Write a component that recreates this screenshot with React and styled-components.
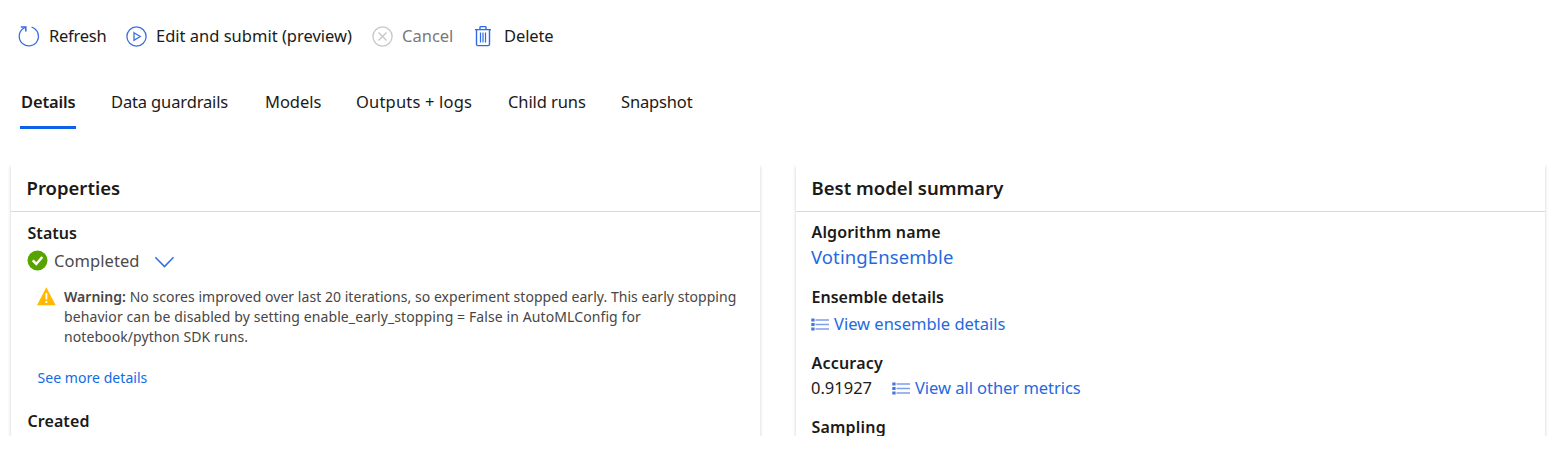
import React from 'react';
import styled, { createGlobalStyle } from 'styled-components';

const Global = createGlobalStyle`
  * { box-sizing: border-box; }
  body {
    margin: 0;
    background: #fff;
    color: #1b1a19;
    font-family: "Segoe UI", "Noto Sans", "Open Sans", sans-serif;
    overflow: hidden;
  }
`;

const Page = styled.div`
  width: 1549px;
  height: 436px;
  overflow: hidden;
`;

const Toolbar = styled.div`
  display: flex;
  align-items: center;
  height: 72px;
  padding-left: 18px;
`;

const Command = styled.button`
  display: flex;
  align-items: center;
  gap: ${(p) => p.$gap}px;
  width: ${(p) => p.$width}px;
  height: 28px;
  padding: 0;
  border: 0;
  background: none;
  font: inherit;
  font-size: 16.5px;
  letter-spacing: ${(p) => p.$track || 0}px;
  white-space: nowrap;
  color: ${(p) => (p.disabled ? '#7a7877' : '#1b1a19')};
`;

const CommandText = styled.span`
  padding-bottom: 2px;
`;

const Icon = styled.svg`
  display: block;
  flex: none;
  fill: none;
  overflow: visible;
`;

const Tabs = styled.nav`
  display: flex;
  height: 57px;
  margin-bottom: 36px;
  padding: 10px 0 0 20px;
`;

const Tab = styled.a`
  height: 47px;
  margin-right: ${(p) => p.$after}px;
  width: ${(p) => p.$width}px;
  padding-left: 1px;
  line-height: 40px;
  font-size: 16.5px;
  font-weight: ${(p) => (p.$active ? 600 : 400)};
  letter-spacing: ${(p) => p.$track}px;
  white-space: nowrap;
  border-bottom: ${(p) => (p.$active ? '3px solid #0f62e6' : '0')};
`;

const Cards = styled.main`
  display: flex;
  gap: 36px;
  padding-left: 11px;
`;

const Card = styled.section`
  width: 749px;
  height: 320px;
  background: #fff;
  box-shadow: 0 2px 4px rgba(0, 0, 0, 0.14), 0 0 2px rgba(0, 0, 0, 0.08);
  clip-path: inset(0 -5px -5px -5px);
`;

const CardTitle = styled.h2`
  height: 47px;
  margin: 0;
  padding-left: ${(p) => p.$indent}px;
  border-bottom: 1px solid #d9d9d9;
  font-size: 18.5px;
  font-weight: 600;
  line-height: 46px;
  letter-spacing: ${(p) => p.$track}px;
`;

const Body = styled.div`
  padding: ${(p) => p.$pad};
`;

const Label = styled.h3`
  margin: 0;
  height: 24px;
  padding-left: 0.5px;
  font-size: 16px;
  font-weight: 600;
  line-height: 24px;
  letter-spacing: ${(p) => p.$track}px;
`;

const Field = styled.div`
  height: ${(p) => p.$height}px;
`;

const Row = styled.div`
  display: flex;
  align-items: center;
  height: ${(p) => p.$height || 28}px;
`;

const StatusText = styled.span`
  width: 100px;
  margin-left: 7px;
  font-size: 16.5px;
  letter-spacing: 0.06px;
  color: #4b4a49;
`;

const Warning = styled.div`
  display: flex;
  align-items: flex-start;
  gap: 8px;
  margin: 12px 0 0 10px;
`;

const Message = styled.p`
  margin: 0;
  font-size: 14px;
  line-height: 20px;
  color: #484644;
  white-space: nowrap;

  strong { font-weight: 600; letter-spacing: 0.02px; }
`;

const Line = styled.span`
  display: block;
  letter-spacing: ${(p) => p.$track}px;
`;

const Link = styled.a`
  font-size: ${(p) => p.$size || 16.5}px;
  letter-spacing: ${(p) => p.$track || 0}px;
  color: #2569df;
  white-space: nowrap;
`;

const MoreLink = styled(Link)`
  display: block;
  margin: 21px 0 21px 10.5px;
  height: 20px;
  line-height: 20px;
  color: #126be6;
`;

const Value = styled.span`
  width: 81px;
  font-size: 16.5px;
`;

const ListMark = styled(Icon)`
  margin: ${(p) => p.$top || 2}px 5px 0 0;
`;

const Chevron = styled(Icon)`
  margin-top: 3px;
`;

const RefreshIcon = () => (
  <Icon width="21" height="21" viewBox="0 0 21 21" stroke="#3b6fe3" strokeWidth="1.3">
    <path d="M13.6 1.1A9.6 9.6 0 1 1 4.6 3L7.6 1" />
    <path d="M2.8 1H7.8V5.6" strokeWidth="1.6" />
  </Icon>
);

const PlayIcon = () => (
  <Icon width="21" height="21" viewBox="0 0 21 21" stroke="#3b6fe3" strokeWidth="1.3">
    <circle cx="10.5" cy="10.5" r="9.6" />
    <path d="M8 6.7 14.2 10.5 8 14.3Z" />
  </Icon>
);

const CancelIcon = () => (
  <Icon width="21" height="21" viewBox="0 0 21 21" stroke="#c8c6c8" strokeWidth="1.3">
    <circle cx="10.5" cy="10.5" r="9.6" />
    <path d="M6.5 6.5 14.5 14.5M14.5 6.5 6.5 14.5" />
  </Icon>
);

const TrashIcon = () => (
  <Icon width="17" height="21" viewBox="0 0 17 21" stroke="#2f6be6" strokeWidth="1.4">
    <path d="M0 3.6H16M5 3.4V1.3Q5 .6 5.7 .6H10.3Q11 .6 11 1.3V3.4M1.5 3.8V18.2Q1.5 19.6 2.9 19.6H13.1Q14.5 19.6 14.5 18.2V3.8" />
    <path d="M5.5 6.5V16.5M8 6.5V16.5M10.5 6.5V16.5" strokeWidth="1.2" />
  </Icon>
);

const CheckIcon = () => (
  <Icon width="20" height="20" viewBox="0 0 20 20">
    <circle cx="10.5" cy="10.5" r="10" fill="#57a300" />
    <path d="M5.7 10.4 9.3 14 15.3 7" stroke="#fff" strokeWidth="2.5" />
  </Icon>
);

const ChevronIcon = () => (
  <Chevron width="20" height="12" viewBox="0 0 20 12" stroke="#2f6fe6" strokeWidth="1.5">
    <path d="M1.3 1.2 10.5 10.6 19.5 1.2" />
  </Chevron>
);

const WarningIcon = () => (
  <Icon width="19" height="19" viewBox="0 0 19 19">
    <path d="M9.3 .3 18.7 18.3H0Z" fill="#ffb900" />
    <path d="M9.4 6V12.4M9.4 14V16" stroke="#fff" strokeWidth="1.8" />
  </Icon>
);

const ListIcon = ({ top }) => (
  <ListMark $top={top} width="18" height="13" viewBox="0 0 18 13">
    <path d="M4.5 2H18M4.5 6.5H18M4.5 11H18" stroke="#7f9fec" strokeWidth="1.5" />
    <path d="M0.3 2H3.6M0.3 6.5H3.6M0.3 11H3.6" stroke="#4874e4" strokeWidth="3.2" />
  </ListMark>
);

const tabs = [
  ['Details', 56, 34, -0.15],
  ['Data guardrails', 119, 35, -0.14],
  ['Models', 56, 35, -0.05],
  ['Outputs + logs', 117, 35, 0.18],
  ['Child runs', 78, 35, -0.1],
  ['Snapshot', 73, 0, -0.15],
];

export default function App() {
  return (
    <Page>
      <Global />
      <Toolbar>
        <Command $gap={10} $width={108} $track={-0.26}><RefreshIcon /><CommandText>Refresh</CommandText></Command>
        <Command $gap={9} $width={246} $track={0}><PlayIcon /><CommandText>Edit and submit (preview)</CommandText></Command>
        <Command $gap={9} $width={103} $track={0} disabled><CancelIcon /><CommandText>Cancel</CommandText></Command>
        <Command $gap={12} $width={80} $track={-0.1}><TrashIcon /><CommandText>Delete</CommandText></Command>
      </Toolbar>
      <Tabs>
        {tabs.map(([name, width, after, track], i) => (
          <Tab key={name} $active={i === 0} $width={width} $after={after} $track={track}>{name}</Tab>
        ))}
      </Tabs>
      <Cards>
        <Card>
          <CardTitle $indent={15.5} $track={0}>Properties</CardTitle>
          <Body $pad="9px 0 0 16px">
            <Label $track={0.05}>Status</Label>
            <Row $height={30}>
              <CheckIcon />
              <StatusText>Completed</StatusText>
              <ChevronIcon />
            </Row>
            <Warning>
              <WarningIcon />
              <Message>
                <Line $track={0.04}>
                  <strong>Warning:</strong> No scores improved over last 20 iterations, so experiment stopped early. This early stopping
                </Line>
                <Line $track={0.1}>behavior can be disabled by setting enable_early_stopping = False in AutoMLConfig for</Line>
                <Line $track={0.08}>notebook/python SDK runs.</Line>
              </Message>
            </Warning>
            <MoreLink $size={14} $track={0.05}>See more details</MoreLink>
            <Label $track={0.08}>Created</Label>
          </Body>
        </Card>
        <Card>
          <CardTitle $indent={15.5} $track={0.02}>Best model summary</CardTitle>
          <Body $pad="8px 0 0 15px">
            <Field $height={65}>
              <Label $track={0.15}>Algorithm name</Label>
              <Row $height={25}><Link $size={18.5} $track={0.1}>VotingEnsemble</Link></Row>
            </Field>
            <Field $height={66}>
              <Label $track={0.03}>Ensemble details</Label>
              <Row><ListIcon top={3} /><Link $track={-0.01}>View ensemble details</Link></Row>
            </Field>
            <Field $height={64}>
              <Label $track={0.2}>Accuracy</Label>
              <Row $height={24}><Value>0.91927</Value><ListIcon top={3} /><Link $track={-0.04}>View all other metrics</Link></Row>
            </Field>
            <Label $track={0.2}>Sampling</Label>
          </Body>
        </Card>
      </Cards>
    </Page>
  );
}
